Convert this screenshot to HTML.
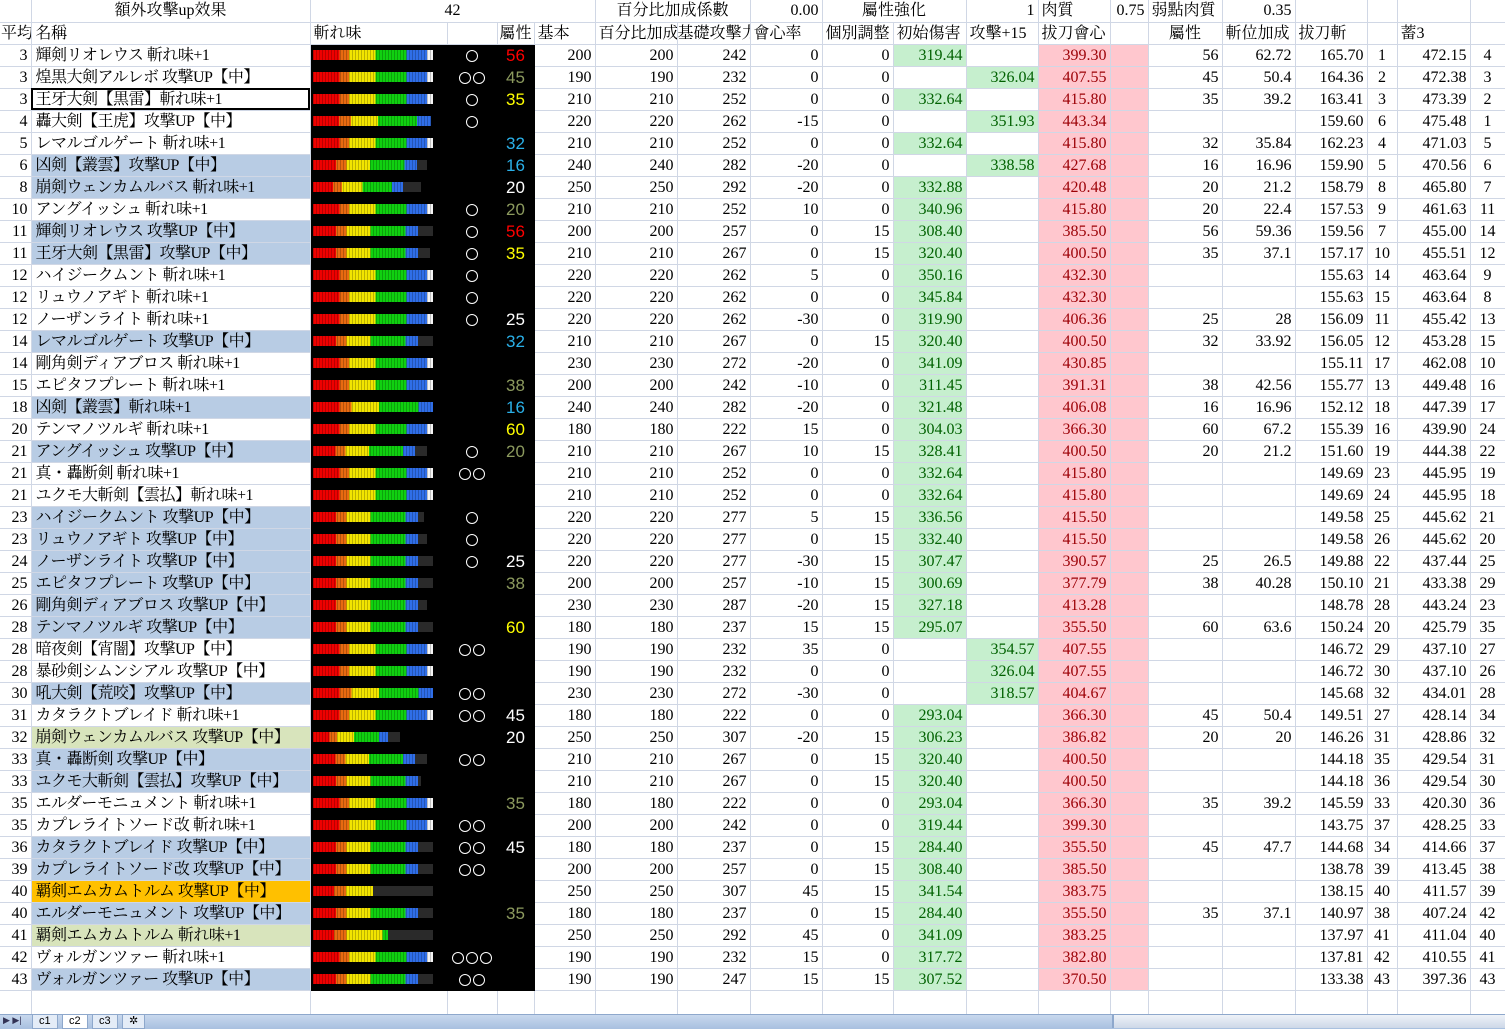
<!DOCTYPE html>
<html><head><meta charset="utf-8">
<style>
html,body{margin:0;padding:0;background:#fff;width:1505px;height:1028px;overflow:hidden}
table{border-collapse:collapse;table-layout:fixed;width:1505px;position:absolute;left:0;top:0;font-family:"Liberation Serif","Noto Serif CJK JP",serif;font-size:16px;color:#000}
td{height:21px;border-right:1px solid #d0d7e5;border-bottom:1px solid #d0d7e5;padding:0 3px;white-space:nowrap;overflow:hidden;text-align:right;line-height:21px;box-sizing:border-box}
tr{height:22px}
td.n{text-align:left;padding-left:4px;font-size:16px;letter-spacing:-0.5px}
td.k{background:#000;border-color:#000;text-align:left;padding:0}
td.c{background:#000;border-color:#000;color:#fff;text-align:center;padding:0}
td.c b{display:inline-block;width:10px;height:10px;border:1.5px solid #fff;border-radius:50%;margin:0 1px;vertical-align:middle}
td.a{background:#000;border-color:#000;text-align:center;font-family:"Liberation Sans",sans-serif;font-size:17px}
.b{background:#b8cce4}.pg{background:#d8e4bc}.or{background:#ffc000}
td.g{background:#c6efce;color:#006100}
td.p{background:#ffc7ce;color:#9c0006}
td.pp{background:#ffc7ce}
td.m{text-align:center}
td.l{text-align:left}
.r{color:#ff0000}.o{color:#8c9a5e}.y{color:#ffff00}.cy{color:#2ab0e8}.w{color:#fff}
.s{display:block;margin-left:2px;height:10px;background:#2a2a2a;position:relative}
.s i{position:absolute;left:0;top:0;height:10px;background:repeating-linear-gradient(90deg,rgba(0,0,0,.22) 0 1px,transparent 1px 3px),linear-gradient(90deg,#e00 0 22%,#e86a10 22% 30%,#f2e400 30% 52%,#10d010 52% 78%,#2f6ee8 78% 95%,#f4f4f4 95% 100%)}
.s i.t{background:repeating-linear-gradient(90deg,rgba(0,0,0,.22) 0 1px,transparent 1px 3px),linear-gradient(90deg,#e00 0 22%,#e86a10 22% 32%,#f2e400 32% 55%,#10d010 55% 88%,#2f6ee8 88% 100%)}
.sel{outline:2px solid #000;outline-offset:-2px}
.tabs{position:absolute;left:0;top:1014px;width:1505px;height:14px;background:linear-gradient(#c8d8ee,#a8c0e0);border-top:1px solid #8ea8cc;font-family:"Liberation Sans",sans-serif;font-size:11px}
.tab{position:absolute;top:0;height:13px;background:#e4ecf7;border:1px solid #8ea8cc;border-top:none;padding:0 6px;line-height:12px}
</style></head><body>
<table>
<colgroup><col style="width:31px"><col style="width:279px"><col style="width:137px"><col style="width:50px"><col style="width:37px"><col style="width:61px"><col style="width:82px"><col style="width:73px"><col style="width:72px"><col style="width:71px"><col style="width:73px"><col style="width:72px"><col style="width:72px"><col style="width:38px"><col style="width:74px"><col style="width:73px"><col style="width:72px"><col style="width:30px"><col style="width:73px"><col style="width:35px"></colgroup>
<tr><td></td><td class="m">額外攻擊up效果</td><td colspan="4" class="m">42</td><td colspan="2" class="m">百分比加成係數</td><td>0.00</td><td colspan="2" class="m">屬性強化</td><td>1</td><td class="l">肉質</td><td>0.75</td><td class="l">弱點肉質</td><td>0.35</td><td></td><td></td><td></td><td></td></tr>
<tr><td class="l" style="padding:0 1px">平均</td><td class="n">名稱</td><td class="l">斬れ味</td><td></td><td class="m" style="padding:0">屬性</td><td class="l">基本</td><td class="l">百分比加成</td><td class="l" style="padding:0">基礎攻擊力</td><td class="l">會心率</td><td class="l">個別調整</td><td class="l">初始傷害</td><td class="l">攻擊+15</td><td class="l">拔刀會心</td><td></td><td class="m">屬性</td><td class="l">斬位加成</td><td class="l">拔刀斬</td><td></td><td class="l">蓄3</td><td></td></tr>

<tr><td>3</td><td class="n">輝剣リオレウス 斬れ味+1</td><td class="k"><span class="s" style="width:120px"><i style="width:120px"></i></span></td><td class="c"><b></b></td><td class="a r">56</td><td>200</td><td>200</td><td>242</td><td>0</td><td>0</td><td class="g">319.44</td><td></td><td class="p">399.30</td><td class="pp"></td><td>56</td><td>62.72</td><td>165.70</td><td class="m">1</td><td>472.15</td><td class="m">4</td></tr>
<tr><td>3</td><td class="n">煌黒大剣アルレボ 攻撃UP【中】</td><td class="k"><span class="s" style="width:120px"><i style="width:120px"></i></span></td><td class="c"><b></b><b></b></td><td class="a o">45</td><td>190</td><td>190</td><td>232</td><td>0</td><td>0</td><td></td><td class="g">326.04</td><td class="p">407.55</td><td class="pp"></td><td>45</td><td>50.4</td><td>164.36</td><td class="m">2</td><td>472.38</td><td class="m">3</td></tr>
<tr><td>3</td><td class="n sel">王牙大剣【黒雷】斬れ味+1</td><td class="k"><span class="s" style="width:120px"><i style="width:120px"></i></span></td><td class="c"><b></b></td><td class="a y">35</td><td>210</td><td>210</td><td>252</td><td>0</td><td>0</td><td class="g">332.64</td><td></td><td class="p">415.80</td><td class="pp"></td><td>35</td><td>39.2</td><td>163.41</td><td class="m">3</td><td>473.39</td><td class="m">2</td></tr>
<tr><td>4</td><td class="n">轟大剣【王虎】攻撃UP【中】</td><td class="k"><span class="s" style="width:118px"><i class="t" style="width:118px"></i></span></td><td class="c"><b></b></td><td class="a"></td><td>220</td><td>220</td><td>262</td><td>-15</td><td>0</td><td></td><td class="g">351.93</td><td class="p">443.34</td><td class="pp"></td><td></td><td></td><td>159.60</td><td class="m">6</td><td>475.48</td><td class="m">1</td></tr>
<tr><td>5</td><td class="n">レマルゴルゲート 斬れ味+1</td><td class="k"><span class="s" style="width:120px"><i style="width:120px"></i></span></td><td class="c"></td><td class="a cy">32</td><td>210</td><td>210</td><td>252</td><td>0</td><td>0</td><td class="g">332.64</td><td></td><td class="p">415.80</td><td class="pp"></td><td>32</td><td>35.84</td><td>162.23</td><td class="m">4</td><td>471.03</td><td class="m">5</td></tr>
<tr><td>6</td><td class="n b">凶剣【叢雲】攻撃UP【中】</td><td class="k"><span class="s" style="width:114px"><i class="t" style="width:104px"></i></span></td><td class="c"></td><td class="a cy">16</td><td>240</td><td>240</td><td>282</td><td>-20</td><td>0</td><td></td><td class="g">338.58</td><td class="p">427.68</td><td class="pp"></td><td>16</td><td>16.96</td><td>159.90</td><td class="m">5</td><td>470.56</td><td class="m">6</td></tr>
<tr><td>8</td><td class="n b">崩剣ウェンカムルバス 斬れ味+1</td><td class="k"><span class="s" style="width:108px"><i class="t" style="width:90px"></i></span></td><td class="c"></td><td class="a w">20</td><td>250</td><td>250</td><td>292</td><td>-20</td><td>0</td><td class="g">332.88</td><td></td><td class="p">420.48</td><td class="pp"></td><td>20</td><td>21.2</td><td>158.79</td><td class="m">8</td><td>465.80</td><td class="m">7</td></tr>
<tr><td>10</td><td class="n">アングイッシュ 斬れ味+1</td><td class="k"><span class="s" style="width:120px"><i style="width:120px"></i></span></td><td class="c"><b></b></td><td class="a o">20</td><td>210</td><td>210</td><td>252</td><td>10</td><td>0</td><td class="g">340.96</td><td></td><td class="p">415.80</td><td class="pp"></td><td>20</td><td>22.4</td><td>157.53</td><td class="m">9</td><td>461.63</td><td class="m">11</td></tr>
<tr><td>11</td><td class="n b">輝剣リオレウス 攻撃UP【中】</td><td class="k"><span class="s" style="width:120px"><i class="t" style="width:105px"></i></span></td><td class="c"><b></b></td><td class="a r">56</td><td>200</td><td>200</td><td>257</td><td>0</td><td>15</td><td class="g">308.40</td><td></td><td class="p">385.50</td><td class="pp"></td><td>56</td><td>59.36</td><td>159.56</td><td class="m">7</td><td>455.00</td><td class="m">14</td></tr>
<tr><td>11</td><td class="n b">王牙大剣【黒雷】攻撃UP【中】</td><td class="k"><span class="s" style="width:117px"><i class="t" style="width:105px"></i></span></td><td class="c"><b></b></td><td class="a y">35</td><td>210</td><td>210</td><td>267</td><td>0</td><td>15</td><td class="g">320.40</td><td></td><td class="p">400.50</td><td class="pp"></td><td>35</td><td>37.1</td><td>157.17</td><td class="m">10</td><td>455.51</td><td class="m">12</td></tr>
<tr><td>12</td><td class="n">ハイジークムント 斬れ味+1</td><td class="k"><span class="s" style="width:120px"><i style="width:120px"></i></span></td><td class="c"><b></b></td><td class="a"></td><td>220</td><td>220</td><td>262</td><td>5</td><td>0</td><td class="g">350.16</td><td></td><td class="p">432.30</td><td class="pp"></td><td></td><td></td><td>155.63</td><td class="m">14</td><td>463.64</td><td class="m">9</td></tr>
<tr><td>12</td><td class="n">リュウノアギト 斬れ味+1</td><td class="k"><span class="s" style="width:120px"><i style="width:120px"></i></span></td><td class="c"><b></b></td><td class="a"></td><td>220</td><td>220</td><td>262</td><td>0</td><td>0</td><td class="g">345.84</td><td></td><td class="p">432.30</td><td class="pp"></td><td></td><td></td><td>155.63</td><td class="m">15</td><td>463.64</td><td class="m">8</td></tr>
<tr><td>12</td><td class="n">ノーザンライト 斬れ味+1</td><td class="k"><span class="s" style="width:120px"><i style="width:120px"></i></span></td><td class="c"><b></b></td><td class="a w">25</td><td>220</td><td>220</td><td>262</td><td>-30</td><td>0</td><td class="g">319.90</td><td></td><td class="p">406.36</td><td class="pp"></td><td>25</td><td>28</td><td>156.09</td><td class="m">11</td><td>455.42</td><td class="m">13</td></tr>
<tr><td>14</td><td class="n b">レマルゴルゲート 攻撃UP【中】</td><td class="k"><span class="s" style="width:120px"><i class="t" style="width:105px"></i></span></td><td class="c"></td><td class="a cy">32</td><td>210</td><td>210</td><td>267</td><td>0</td><td>15</td><td class="g">320.40</td><td></td><td class="p">400.50</td><td class="pp"></td><td>32</td><td>33.92</td><td>156.05</td><td class="m">12</td><td>453.28</td><td class="m">15</td></tr>
<tr><td>14</td><td class="n">剛角剣ディアブロス 斬れ味+1</td><td class="k"><span class="s" style="width:120px"><i style="width:120px"></i></span></td><td class="c"></td><td class="a"></td><td>230</td><td>230</td><td>272</td><td>-20</td><td>0</td><td class="g">341.09</td><td></td><td class="p">430.85</td><td class="pp"></td><td></td><td></td><td>155.11</td><td class="m">17</td><td>462.08</td><td class="m">10</td></tr>
<tr><td>15</td><td class="n">エピタフプレート 斬れ味+1</td><td class="k"><span class="s" style="width:120px"><i style="width:120px"></i></span></td><td class="c"></td><td class="a o">38</td><td>200</td><td>200</td><td>242</td><td>-10</td><td>0</td><td class="g">311.45</td><td></td><td class="p">391.31</td><td class="pp"></td><td>38</td><td>42.56</td><td>155.77</td><td class="m">13</td><td>449.48</td><td class="m">16</td></tr>
<tr><td>18</td><td class="n b">凶剣【叢雲】斬れ味+1</td><td class="k"><span class="s" style="width:120px"><i class="t" style="width:120px"></i></span></td><td class="c"></td><td class="a cy">16</td><td>240</td><td>240</td><td>282</td><td>-20</td><td>0</td><td class="g">321.48</td><td></td><td class="p">406.08</td><td class="pp"></td><td>16</td><td>16.96</td><td>152.12</td><td class="m">18</td><td>447.39</td><td class="m">17</td></tr>
<tr><td>20</td><td class="n">テンマノツルギ 斬れ味+1</td><td class="k"><span class="s" style="width:120px"><i style="width:120px"></i></span></td><td class="c"></td><td class="a y">60</td><td>180</td><td>180</td><td>222</td><td>15</td><td>0</td><td class="g">304.03</td><td></td><td class="p">366.30</td><td class="pp"></td><td>60</td><td>67.2</td><td>155.39</td><td class="m">16</td><td>439.90</td><td class="m">24</td></tr>
<tr><td>21</td><td class="n b">アングイッシュ 攻撃UP【中】</td><td class="k"><span class="s" style="width:114px"><i class="t" style="width:102px"></i></span></td><td class="c"><b></b></td><td class="a o">20</td><td>210</td><td>210</td><td>267</td><td>10</td><td>15</td><td class="g">328.41</td><td></td><td class="p">400.50</td><td class="pp"></td><td>20</td><td>21.2</td><td>151.60</td><td class="m">19</td><td>444.38</td><td class="m">22</td></tr>
<tr><td>21</td><td class="n">真・轟断剣 斬れ味+1</td><td class="k"><span class="s" style="width:120px"><i style="width:120px"></i></span></td><td class="c"><b></b><b></b></td><td class="a"></td><td>210</td><td>210</td><td>252</td><td>0</td><td>0</td><td class="g">332.64</td><td></td><td class="p">415.80</td><td class="pp"></td><td></td><td></td><td>149.69</td><td class="m">23</td><td>445.95</td><td class="m">19</td></tr>
<tr><td>21</td><td class="n">ユクモ大斬剣【雲払】斬れ味+1</td><td class="k"><span class="s" style="width:120px"><i style="width:120px"></i></span></td><td class="c"></td><td class="a"></td><td>210</td><td>210</td><td>252</td><td>0</td><td>0</td><td class="g">332.64</td><td></td><td class="p">415.80</td><td class="pp"></td><td></td><td></td><td>149.69</td><td class="m">24</td><td>445.95</td><td class="m">18</td></tr>
<tr><td>23</td><td class="n b">ハイジークムント 攻撃UP【中】</td><td class="k"><span class="s" style="width:111px"><i class="t" style="width:105px"></i></span></td><td class="c"><b></b></td><td class="a"></td><td>220</td><td>220</td><td>277</td><td>5</td><td>15</td><td class="g">336.56</td><td></td><td class="p">415.50</td><td class="pp"></td><td></td><td></td><td>149.58</td><td class="m">25</td><td>445.62</td><td class="m">21</td></tr>
<tr><td>23</td><td class="n b">リュウノアギト 攻撃UP【中】</td><td class="k"><span class="s" style="width:114px"><i class="t" style="width:105px"></i></span></td><td class="c"><b></b></td><td class="a"></td><td>220</td><td>220</td><td>277</td><td>0</td><td>15</td><td class="g">332.40</td><td></td><td class="p">415.50</td><td class="pp"></td><td></td><td></td><td>149.58</td><td class="m">26</td><td>445.62</td><td class="m">20</td></tr>
<tr><td>24</td><td class="n b">ノーザンライト 攻撃UP【中】</td><td class="k"><span class="s" style="width:120px"><i class="t" style="width:105px"></i></span></td><td class="c"><b></b></td><td class="a w">25</td><td>220</td><td>220</td><td>277</td><td>-30</td><td>15</td><td class="g">307.47</td><td></td><td class="p">390.57</td><td class="pp"></td><td>25</td><td>26.5</td><td>149.88</td><td class="m">22</td><td>437.44</td><td class="m">25</td></tr>
<tr><td>25</td><td class="n b">エピタフプレート 攻撃UP【中】</td><td class="k"><span class="s" style="width:120px"><i class="t" style="width:105px"></i></span></td><td class="c"></td><td class="a o">38</td><td>200</td><td>200</td><td>257</td><td>-10</td><td>15</td><td class="g">300.69</td><td></td><td class="p">377.79</td><td class="pp"></td><td>38</td><td>40.28</td><td>150.10</td><td class="m">21</td><td>433.38</td><td class="m">29</td></tr>
<tr><td>26</td><td class="n b">剛角剣ディアブロス 攻撃UP【中】</td><td class="k"><span class="s" style="width:114px"><i class="t" style="width:105px"></i></span></td><td class="c"></td><td class="a"></td><td>230</td><td>230</td><td>287</td><td>-20</td><td>15</td><td class="g">327.18</td><td></td><td class="p">413.28</td><td class="pp"></td><td></td><td></td><td>148.78</td><td class="m">28</td><td>443.24</td><td class="m">23</td></tr>
<tr><td>28</td><td class="n b">テンマノツルギ 攻撃UP【中】</td><td class="k"><span class="s" style="width:120px"><i class="t" style="width:105px"></i></span></td><td class="c"></td><td class="a y">60</td><td>180</td><td>180</td><td>237</td><td>15</td><td>15</td><td class="g">295.07</td><td></td><td class="p">355.50</td><td class="pp"></td><td>60</td><td>63.6</td><td>150.24</td><td class="m">20</td><td>425.79</td><td class="m">35</td></tr>
<tr><td>28</td><td class="n">暗夜剣【宵闇】攻撃UP【中】</td><td class="k"><span class="s" style="width:120px"><i style="width:120px"></i></span></td><td class="c"><b></b><b></b></td><td class="a"></td><td>190</td><td>190</td><td>232</td><td>35</td><td>0</td><td></td><td class="g">354.57</td><td class="p">407.55</td><td class="pp"></td><td></td><td></td><td>146.72</td><td class="m">29</td><td>437.10</td><td class="m">27</td></tr>
<tr><td>28</td><td class="n">暴砂剣シムンシアル 攻撃UP【中】</td><td class="k"><span class="s" style="width:120px"><i style="width:120px"></i></span></td><td class="c"></td><td class="a"></td><td>190</td><td>190</td><td>232</td><td>0</td><td>0</td><td></td><td class="g">326.04</td><td class="p">407.55</td><td class="pp"></td><td></td><td></td><td>146.72</td><td class="m">30</td><td>437.10</td><td class="m">26</td></tr>
<tr><td>30</td><td class="n b">吼大剣【荒咬】攻撃UP【中】</td><td class="k"><span class="s" style="width:120px"><i class="t" style="width:120px"></i></span></td><td class="c"><b></b><b></b></td><td class="a"></td><td>230</td><td>230</td><td>272</td><td>-30</td><td>0</td><td></td><td class="g">318.57</td><td class="p">404.67</td><td class="pp"></td><td></td><td></td><td>145.68</td><td class="m">32</td><td>434.01</td><td class="m">28</td></tr>
<tr><td>31</td><td class="n">カタラクトブレイド 斬れ味+1</td><td class="k"><span class="s" style="width:120px"><i style="width:120px"></i></span></td><td class="c"><b></b><b></b></td><td class="a w">45</td><td>180</td><td>180</td><td>222</td><td>0</td><td>0</td><td class="g">293.04</td><td></td><td class="p">366.30</td><td class="pp"></td><td>45</td><td>50.4</td><td>149.51</td><td class="m">27</td><td>428.14</td><td class="m">34</td></tr>
<tr><td>32</td><td class="n pg">崩剣ウェンカムルバス 攻撃UP【中】</td><td class="k"><span class="s" style="width:87px"><i class="t" style="width:75px"></i></span></td><td class="c"></td><td class="a w">20</td><td>250</td><td>250</td><td>307</td><td>-20</td><td>15</td><td class="g">306.23</td><td></td><td class="p">386.82</td><td class="pp"></td><td>20</td><td>20</td><td>146.26</td><td class="m">31</td><td>428.86</td><td class="m">32</td></tr>
<tr><td>33</td><td class="n b">真・轟断剣 攻撃UP【中】</td><td class="k"><span class="s" style="width:114px"><i class="t" style="width:102px"></i></span></td><td class="c"><b></b><b></b></td><td class="a"></td><td>210</td><td>210</td><td>267</td><td>0</td><td>15</td><td class="g">320.40</td><td></td><td class="p">400.50</td><td class="pp"></td><td></td><td></td><td>144.18</td><td class="m">35</td><td>429.54</td><td class="m">31</td></tr>
<tr><td>33</td><td class="n b">ユクモ大斬剣【雲払】攻撃UP【中】</td><td class="k"><span class="s" style="width:108px"><i class="t" style="width:105px"></i></span></td><td class="c"></td><td class="a"></td><td>210</td><td>210</td><td>267</td><td>0</td><td>15</td><td class="g">320.40</td><td></td><td class="p">400.50</td><td class="pp"></td><td></td><td></td><td>144.18</td><td class="m">36</td><td>429.54</td><td class="m">30</td></tr>
<tr><td>35</td><td class="n">エルダーモニュメント 斬れ味+1</td><td class="k"><span class="s" style="width:120px"><i style="width:120px"></i></span></td><td class="c"></td><td class="a o">35</td><td>180</td><td>180</td><td>222</td><td>0</td><td>0</td><td class="g">293.04</td><td></td><td class="p">366.30</td><td class="pp"></td><td>35</td><td>39.2</td><td>145.59</td><td class="m">33</td><td>420.30</td><td class="m">36</td></tr>
<tr><td>35</td><td class="n">カプレライトソード改 斬れ味+1</td><td class="k"><span class="s" style="width:120px"><i style="width:120px"></i></span></td><td class="c"><b></b><b></b></td><td class="a"></td><td>200</td><td>200</td><td>242</td><td>0</td><td>0</td><td class="g">319.44</td><td></td><td class="p">399.30</td><td class="pp"></td><td></td><td></td><td>143.75</td><td class="m">37</td><td>428.25</td><td class="m">33</td></tr>
<tr><td>36</td><td class="n b">カタラクトブレイド 攻撃UP【中】</td><td class="k"><span class="s" style="width:120px"><i class="t" style="width:105px"></i></span></td><td class="c"><b></b><b></b></td><td class="a w">45</td><td>180</td><td>180</td><td>237</td><td>0</td><td>15</td><td class="g">284.40</td><td></td><td class="p">355.50</td><td class="pp"></td><td>45</td><td>47.7</td><td>144.68</td><td class="m">34</td><td>414.66</td><td class="m">37</td></tr>
<tr><td>39</td><td class="n b">カプレライトソード改 攻撃UP【中】</td><td class="k"><span class="s" style="width:120px"><i class="t" style="width:105px"></i></span></td><td class="c"><b></b><b></b></td><td class="a"></td><td>200</td><td>200</td><td>257</td><td>0</td><td>15</td><td class="g">308.40</td><td></td><td class="p">385.50</td><td class="pp"></td><td></td><td></td><td>138.78</td><td class="m">39</td><td>413.45</td><td class="m">38</td></tr>
<tr><td>40</td><td class="n or">覇剣エムカムトルム 攻撃UP【中】</td><td class="k"><span class="s" style="width:120px"><i class="t" style="width:60px;background:repeating-linear-gradient(90deg,rgba(0,0,0,.22) 0 1px,transparent 1px 3px),linear-gradient(90deg,#e00 0 35%,#e86a10 35% 55%,#f2e400 55% 100%)"></i></span></td><td class="c"></td><td class="a"></td><td>250</td><td>250</td><td>307</td><td>45</td><td>15</td><td class="g">341.54</td><td></td><td class="p">383.75</td><td class="pp"></td><td></td><td></td><td>138.15</td><td class="m">40</td><td>411.57</td><td class="m">39</td></tr>
<tr><td>40</td><td class="n b">エルダーモニュメント 攻撃UP【中】</td><td class="k"><span class="s" style="width:120px"><i class="t" style="width:105px"></i></span></td><td class="c"></td><td class="a o">35</td><td>180</td><td>180</td><td>237</td><td>0</td><td>15</td><td class="g">284.40</td><td></td><td class="p">355.50</td><td class="pp"></td><td>35</td><td>37.1</td><td>140.97</td><td class="m">38</td><td>407.24</td><td class="m">42</td></tr>
<tr><td>41</td><td class="n pg">覇剣エムカムトルム 斬れ味+1</td><td class="k"><span class="s" style="width:120px"><i class="t" style="width:75px;background:repeating-linear-gradient(90deg,rgba(0,0,0,.22) 0 1px,transparent 1px 3px),linear-gradient(90deg,#e00 0 28%,#e86a10 28% 45%,#f2e400 45% 93%,#10d010 93% 100%)"></i></span></td><td class="c"></td><td class="a"></td><td>250</td><td>250</td><td>292</td><td>45</td><td>0</td><td class="g">341.09</td><td></td><td class="p">383.25</td><td class="pp"></td><td></td><td></td><td>137.97</td><td class="m">41</td><td>411.04</td><td class="m">40</td></tr>
<tr><td>42</td><td class="n">ヴォルガンツァー 斬れ味+1</td><td class="k"><span class="s" style="width:120px"><i style="width:120px"></i></span></td><td class="c"><b></b><b></b><b></b></td><td class="a"></td><td>190</td><td>190</td><td>232</td><td>15</td><td>0</td><td class="g">317.72</td><td></td><td class="p">382.80</td><td class="pp"></td><td></td><td></td><td>137.81</td><td class="m">42</td><td>410.55</td><td class="m">41</td></tr>
<tr><td>43</td><td class="n b">ヴォルガンツァー 攻撃UP【中】</td><td class="k"><span class="s" style="width:120px"><i class="t" style="width:105px"></i></span></td><td class="c"><b></b><b></b></td><td class="a"></td><td>190</td><td>190</td><td>247</td><td>15</td><td>15</td><td class="g">307.52</td><td></td><td class="p">370.50</td><td class="pp"></td><td></td><td></td><td>133.38</td><td class="m">43</td><td>397.36</td><td class="m">43</td></tr>
<tr style="height:24px"><td></td><td></td><td></td><td></td><td></td><td></td><td></td><td></td><td></td><td></td><td></td><td></td><td></td><td></td><td></td><td></td><td></td><td></td><td></td><td></td></tr>
</table>
<div class="tabs">
<span style="position:absolute;left:3px;top:0;color:#335;font-size:9px">▶ ▶|</span>
<span class="tab" style="left:32px">c1</span>
<span class="tab" style="left:62px;background:#fff">c2</span>
<span class="tab" style="left:92px">c3</span>
<span class="tab" style="left:122px">✲</span>
<span style="position:absolute;left:1112px;top:0;width:393px;height:13px;background:linear-gradient(#eef2f8,#cdd8e8);border-left:2px solid #8ea8cc"></span>
</div>
</body></html>
